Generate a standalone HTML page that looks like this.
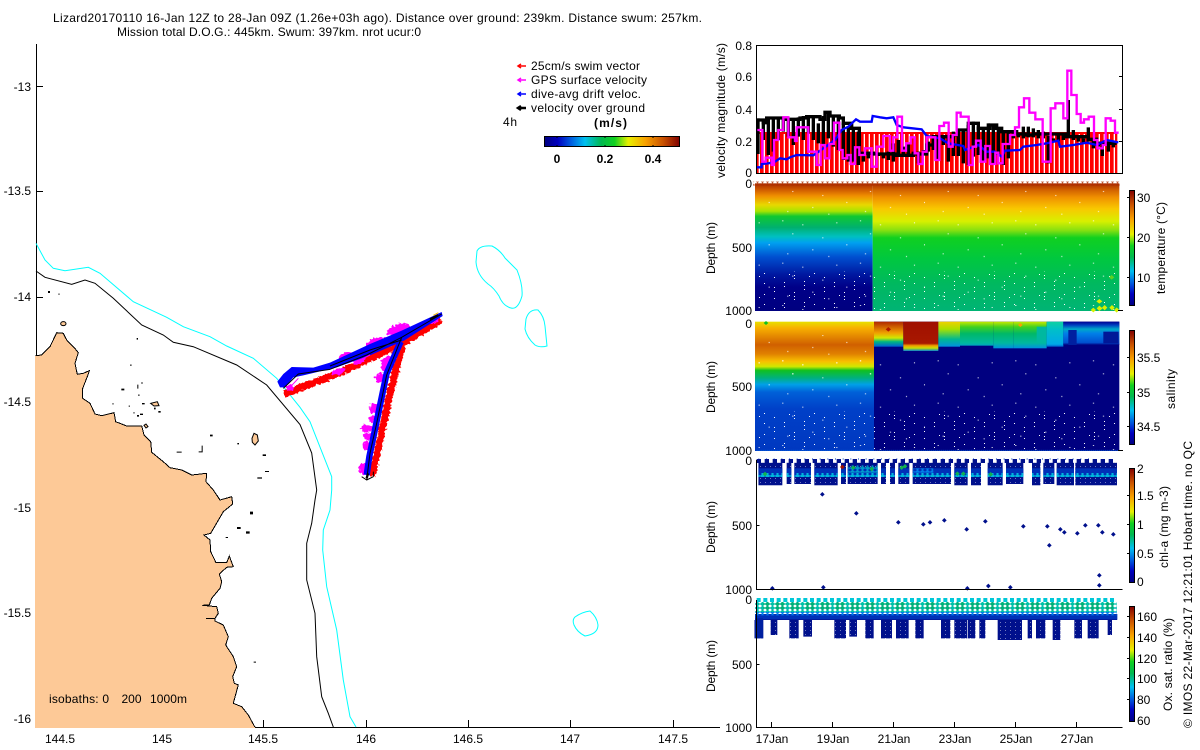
<!DOCTYPE html>
<html><head><meta charset="utf-8"><title>Lizard20170110</title>
<style>
html,body{margin:0;padding:0;background:#fff;overflow:hidden}
svg{display:block}
text{font-family:"Liberation Sans",sans-serif;font-size:12px;fill:#000}
.r{text-anchor:end}.m{text-anchor:middle}.b{font-weight:bold}
</style></head><body>
<svg width="1200" height="750" viewBox="0 0 1200 750" xmlns="http://www.w3.org/2000/svg">
<defs>
<linearGradient id="jetH" x1="0" x2="1" y1="0" y2="0">
<stop offset="0" stop-color="#00007f"/><stop offset=".1" stop-color="#0000c0"/><stop offset=".2" stop-color="#0060e0"/><stop offset=".3" stop-color="#00c0f0"/><stop offset=".42" stop-color="#00b850"/><stop offset=".52" stop-color="#10d020"/><stop offset=".62" stop-color="#e8f000"/><stop offset=".75" stop-color="#f8a000"/><stop offset=".88" stop-color="#c85000"/><stop offset="1" stop-color="#800000"/>
</linearGradient>
<linearGradient id="jetV" x1="0" x2="0" y1="1" y2="0">
<stop offset="0" stop-color="#00007f"/><stop offset=".1" stop-color="#0000c0"/><stop offset=".2" stop-color="#0060e0"/><stop offset=".3" stop-color="#00c0f0"/><stop offset=".42" stop-color="#00b850"/><stop offset=".52" stop-color="#10d020"/><stop offset=".62" stop-color="#e8f000"/><stop offset=".75" stop-color="#f8a000"/><stop offset=".88" stop-color="#c85000"/><stop offset="1" stop-color="#800000"/>
</linearGradient>
<linearGradient id="tL" gradientUnits="userSpaceOnUse" x1="0" x2="0" y1="25" y2="405">
<stop offset="0" stop-color="#a82c00"/><stop offset=".04" stop-color="#c85000"/><stop offset=".1" stop-color="#f09000"/><stop offset=".17" stop-color="#e8d800"/><stop offset=".22" stop-color="#a8e400"/><stop offset=".26" stop-color="#10c830"/><stop offset=".35" stop-color="#00b070"/><stop offset=".42" stop-color="#00c0c0"/><stop offset=".47" stop-color="#00a0f0"/><stop offset=".58" stop-color="#0050d0"/><stop offset=".72" stop-color="#0018a0"/><stop offset=".82" stop-color="#000088"/><stop offset="1" stop-color="#000080"/>
</linearGradient>
<linearGradient id="tR" gradientUnits="userSpaceOnUse" x1="0" x2="0" y1="25" y2="405">
<stop offset="0" stop-color="#a82c00"/><stop offset=".05" stop-color="#d06000"/><stop offset=".11" stop-color="#f09000"/><stop offset=".2" stop-color="#f8c800"/><stop offset=".3" stop-color="#d8f000"/><stop offset=".37" stop-color="#88e010"/><stop offset=".43" stop-color="#10d020"/><stop offset=".6" stop-color="#00c840"/><stop offset=".8" stop-color="#00b860"/><stop offset="1" stop-color="#00b474"/>
</linearGradient>
<linearGradient id="sL" gradientUnits="userSpaceOnUse" x1="0" x2="0" y1="20" y2="405">
<stop offset="0" stop-color="#e8e000"/><stop offset=".05" stop-color="#f8b000"/><stop offset=".18" stop-color="#d06000"/><stop offset=".25" stop-color="#e08000"/><stop offset=".31" stop-color="#f8c000"/><stop offset=".35" stop-color="#d0e800"/><stop offset=".38" stop-color="#10c020"/><stop offset=".44" stop-color="#00b080"/><stop offset=".49" stop-color="#00a0e8"/><stop offset=".55" stop-color="#0060d8"/><stop offset=".68" stop-color="#0040c8"/><stop offset="1" stop-color="#0038c0"/>
</linearGradient>
<linearGradient id="s1" gradientUnits="userSpaceOnUse" x1="0" x2="0" y1="20" y2="95">
<stop offset="0" stop-color="#b02800"/><stop offset=".45" stop-color="#f0a000"/><stop offset=".65" stop-color="#d0e800"/><stop offset=".8" stop-color="#00b880"/><stop offset="1" stop-color="#0060d8"/>
</linearGradient>
<linearGradient id="s2" gradientUnits="userSpaceOnUse" x1="0" x2="0" y1="20" y2="108">
<stop offset="0" stop-color="#a01000"/><stop offset=".74" stop-color="#a81800"/><stop offset=".82" stop-color="#f0a000"/><stop offset=".9" stop-color="#c8e000"/><stop offset="1" stop-color="#0080d8"/>
</linearGradient>
<linearGradient id="s3" gradientUnits="userSpaceOnUse" x1="0" x2="0" y1="20" y2="95">
<stop offset="0" stop-color="#f0d000"/><stop offset=".3" stop-color="#a8e000"/><stop offset=".7" stop-color="#00b890"/><stop offset="1" stop-color="#0090e0"/>
</linearGradient>
<linearGradient id="s4" gradientUnits="userSpaceOnUse" x1="0" x2="0" y1="20" y2="100">
<stop offset="0" stop-color="#c8e800"/><stop offset=".2" stop-color="#40d020"/><stop offset=".45" stop-color="#00b868"/><stop offset=".8" stop-color="#00b8a0"/><stop offset="1" stop-color="#0090e0"/>
</linearGradient>
<linearGradient id="s5" gradientUnits="userSpaceOnUse" x1="0" x2="0" y1="20" y2="95">
<stop offset="0" stop-color="#10d0a0"/><stop offset=".3" stop-color="#00c0c8"/><stop offset=".9" stop-color="#00a8e8"/><stop offset="1" stop-color="#0060d0"/>
</linearGradient>
<linearGradient id="s6" gradientUnits="userSpaceOnUse" x1="0" x2="0" y1="20" y2="90">
<stop offset="0" stop-color="#000090"/><stop offset=".15" stop-color="#0040c0"/><stop offset=".32" stop-color="#00a8c8"/><stop offset=".5" stop-color="#0080e8"/><stop offset=".9" stop-color="#0050d0"/><stop offset="1" stop-color="#000080"/>
</linearGradient>
<pattern id="wdA" patternUnits="userSpaceOnUse" width="233" height="127">
<g fill="#fff"><rect x="14" y="9" width="3" height="3"/><rect x="44" y="48" width="3" height="3"/><rect x="74" y="21" width="3" height="3"/><rect x="104" y="96" width="3" height="3"/><rect x="134" y="60" width="3" height="3"/><rect x="176" y="15" width="3" height="3"/><rect x="206" y="81" width="3" height="3"/><rect x="29" y="108" width="3" height="3"/><rect x="152" y="116" width="3" height="3"/></g>
</pattern>
<pattern id="wdB" patternUnits="userSpaceOnUse" width="150" height="63">
<g fill="#fff"><rect x="12" y="3" width="3" height="3"/><rect x="12" y="15" width="3" height="3"/><rect x="12" y="27" width="3" height="3"/><rect x="42" y="9" width="3" height="3"/><rect x="42" y="42" width="3" height="3"/><rect x="72" y="21" width="3" height="3"/><rect x="72" y="33" width="3" height="3"/><rect x="72" y="54" width="3" height="3"/><rect x="102" y="6" width="3" height="3"/><rect x="102" y="18" width="3" height="3"/><rect x="132" y="36" width="3" height="3"/><rect x="132" y="48" width="3" height="3"/><rect x="132" y="57" width="3" height="3"/><rect x="27" y="51" width="3" height="3"/><rect x="117" y="45" width="3" height="3"/></g>
</pattern>
<pattern id="dN" patternUnits="userSpaceOnUse" width="15" height="12"><rect width="15" height="12" fill="#00108c"/><rect width="2" height="2" fill="#fff"/></pattern>
<pattern id="dB" patternUnits="userSpaceOnUse" width="15" height="12"><rect width="15" height="12" fill="#0030b8"/></pattern>
<pattern id="dM" patternUnits="userSpaceOnUse" width="15" height="12"><path d="M7.5 -1L16 6 7.5 13 -1 6z" fill="#0080e8"/></pattern>
<pattern id="dC" patternUnits="userSpaceOnUse" width="15" height="12"><path d="M7.5 -1L16 6 7.5 13 -1 6z" fill="#00c8d8"/></pattern>
<pattern id="dT" patternUnits="userSpaceOnUse" width="15" height="12"><path d="M7.5 -1L16 6 7.5 13 -1 6z" fill="#00c0a8"/></pattern>
<pattern id="dG" patternUnits="userSpaceOnUse" width="45" height="12"><path d="M7.5 -1L16 6 7.5 13 -1 6zM22 -1L31 6 22 13 14 6z" fill="#00b078"/></pattern>
<pattern id="dR" patternUnits="userSpaceOnUse" width="15" height="12"><path d="M7.5 0L15 6 7.5 12 0 6z" fill="#b03000"/></pattern>
<pattern id="gap" patternUnits="userSpaceOnUse" width="15" height="10"><rect x="11" width="4" height="10" fill="#fff"/></pattern>
<clipPath id="chlc"><path d="M175 38h72v68h-72zM260 38h14v64h-14zM283 38h50v64h-50zM343 38h70v68h-70zM423 38h15v64h-15zM443 38h90v64h-90zM543 38h15v64h-15zM570 38h15v64h-15zM595 38h33v64h-33zM638 38h115v64h-115zM763 38h40v68h-40zM813 38h30v68h-30zM863 38h45v68h-45zM918 38h52v64h-52zM996 38h25v68h-25zM1030 38h33v64h-33zM1070 38h52v68h-52zM1126 38h125v68h-125z"/></clipPath>
<clipPath id="oxc"><path d="M165 72h1087v18h-1087zM163 90h27v55h-27zM212 90h20v45h-20zM268 90h28v55h-28zM310 90h26v50h-26zM403 90h35v55h-35zM448 90h23v50h-23zM496 90h25v55h-25zM543 90h33v55h-33zM588 90h38v55h-38zM646 90h25v55h-25zM723 90h28v55h-28zM763 90h38v55h-38zM803 90h23v55h-23zM838 90h18v55h-18zM893 90h73v60h-73zM983 90h13v55h-13zM1008 90h28v55h-28zM1058 90h23v60h-23zM1123 90h23v55h-23zM1163 90h33v55h-33zM1223 90h13v45h-13z"/></clipPath>
<filter id="rough" x="-10%" y="-10%" width="120%" height="120%"><feTurbulence type="fractalNoise" baseFrequency=".14" numOctaves="1" seed="3" result="n"/><feDisplacementMap in="SourceGraphic" in2="n" scale="16" xChannelSelector="R" yChannelSelector="G"/></filter>
</defs>

<!-- title -->
<text x="53" y="22" textLength="649">Lizard20170110 16-Jan 12Z to 28-Jan 09Z (1.26e+03h ago). Distance over ground: 239km. Distance swum: 257km.</text>
<text x="117" y="36" textLength="304">Mission total D.O.G.: 445km. Swum: 397km. nrot ucur:0</text>

<!-- map land -->
<path fill="#fdc997" stroke="#000" stroke-width="1" shape-rendering="crispEdges" d="M36 355.7L41.7 355 50 346.7 56.7 332.7 63.3 333.3 66.7 340 74 347.3 78.3 352.7 75 363.3 77.3 374.3 83.3 373.3 89.3 370.7 87.3 376.7 82.7 388.3 82.7 398.3 90 403.3 95 414 101.7 415.7 114 412.7 115.7 421.7 126.7 426 141.7 426 144 435 150.7 441.7 151.7 452.3 163.3 461.7 170 467.7 181.7 470 191.7 475 206.7 473.3 206 481.7 213.3 490 220 500 231.7 496.7 232.7 504 223.3 511.7 210.7 533.3 204 535 210 540 210.7 551.7 216 562.7 226.7 562.7 229.3 556 233.3 566.7 226.7 567.3 219.3 574 221.7 581.7 220 588.3 211.7 598.3 209.3 605 202.3 605.3 216.7 606.7 218.3 613.3 215 618.3 206 618.3 215 618.3 215 621 223.3 625 228.3 636.7 225.7 645 233.3 656.7 236.7 666.7 232.7 676.7 234.3 683.3 238.3 685 233.3 703.3 241.7 706.7 248.3 715 255 727.3 36 727.3z"/>
<rect x="35" y="356" width="2" height="372" fill="#fdc997"/>
<rect x="35" y="727" width="220" height="1" fill="#fdc997"/>

<!-- axes -->
<path stroke="#000" stroke-width="1" fill="none" shape-rendering="crispEdges" d="M36.5 44V355M36 86.5h7M36 191.5h7M36 297.5h7M255 727.5H720M263.5 727v-7M366.5 727v-7M468.5 727v-7M570.5 727v-7M673.5 727v-7"/>

<!-- isobaths -->
<polyline fill="none" stroke="#000" stroke-width="1" points="36,271 45,277.3 71.7,284.3 85,280 95,283.3 113.3,298.3 141.7,325 163.3,335 173.3,342.3 193.3,346.7 236.7,365 266.7,385 300,424.5 311.7,453 316.7,490 315,500 311.7,523.3 306.7,543.3 306.7,580 315,613.3 316.7,656.7 321.7,696.7 328.3,713.3 333.3,727"/>
<polyline fill="none" stroke="#00ffff" stroke-width="1" points="36,243.3 45,260 53.3,268.3 65,270.7 88.3,267.3 100,273.3 133.3,301.7 166.7,317.3 183.3,326.7 210,336.7 226.7,346 253.3,358.3 276.7,378.3 300,407.3 310,421.7 331.7,476.7 331.7,490 330,510 323.3,530 322.7,550 326.7,586.7 336.7,630 343.3,680 350,716.7 356,727"/>
<path fill="none" stroke="#00ffff" stroke-width="1" d="M477 251Q480 245 492 246 500 250 505 258L517 270Q523 285 522 296 518 310 511 308 503 306 499 296 494 288 488 284 477 275 476 262zM526 319Q529 309 538 310 544 316 545 326L547 346Q540 348 535 345 527 338 525 329zM590 611Q597 617 598 625 598 634 585 636 577 632 574 625 572 620 575 617 582 612 590 611z"/>

<!-- small islands -->
<g transform="translate(0 240) scale(.33333)" fill="#000">
<path d="M144 153h6v6h-6zM175 161h4v3h-4zM410 294h4v5h-4zM390 374h5v3h-5zM364 446h9v5h-9zM412 434h3v12h-3zM424 427h4v4h-4zM414 464h5v3h-5zM426 489h8v4h-8zM337 490h4v3h-4zM386 497h4v3h-4zM400 517h4v3h-4zM420 521h9v4h-9zM411 525h6v5h-6zM475 513h7v5h-7zM462 503h5v5h-5zM630 584h8v5h-8zM596 634h12v3h-12zM605 617h3v18h-3zM530 635h15v3h-15zM712 609h5v4h-5zM788 643h10v5h-10zM795 693h12v3h-12zM772 712h14v4h-14z"/>
<ellipse cx="190" cy="251" rx="8" ry="6" fill="#fdc997" stroke="#000" stroke-width="3"/>
<path d="M452 490l20-5 5 12-15 1z" fill="#fdc997" stroke="#000" stroke-width="3"/>
<path d="M432 556l6-4 6 8-6 4z" fill="#fdc997" stroke="#000" stroke-width="3"/>
<path d="M756 595l6-15 10 5 3 18-10 12-8-8z" fill="#fdc997" stroke="#000" stroke-width="3"/>
</g>
<g transform="translate(0 490) scale(.33333)" fill="#000">
<path d="M750 65h9v8h-9zM711 111h11v6h-11zM738 124h11v7h-11zM677 141h7v3h-7zM761 515h7v3h-7z"/>
</g>

<!-- tracks -->
<g transform="translate(270 300) scale(.33333)" fill="none" stroke-linejoin="round">
<g filter="url(#rough)">
<polyline stroke="#ff0000" stroke-width="22" points="512,60 400,128 200,222 42,282"/>
<polyline stroke="#ff0000" stroke-width="22" points="398,128 358,290 330,420 306,528"/>
<g fill="#ff00ff">
<ellipse cx="385" cy="88" rx="36" ry="15" transform="rotate(-18 385 88)"/>
<ellipse cx="318" cy="127" rx="30" ry="13" transform="rotate(-20 318 127)"/>
<ellipse cx="228" cy="169" rx="22" ry="12" transform="rotate(-15 228 169)"/>
<ellipse cx="268" cy="181" rx="20" ry="11" transform="rotate(-25 268 181)"/>
<ellipse cx="205" cy="214" rx="20" ry="10" transform="rotate(-15 205 214)"/>
<ellipse cx="350" cy="190" rx="16" ry="24" transform="rotate(25 350 190)"/>
<ellipse cx="330" cy="233" rx="16" ry="13"/>
<ellipse cx="312" cy="325" rx="14" ry="16"/>
<ellipse cx="308" cy="358" rx="12" ry="11"/>
<ellipse cx="290" cy="385" rx="20" ry="11"/>
<ellipse cx="293" cy="410" rx="14" ry="11"/>
<ellipse cx="290" cy="438" rx="12" ry="14"/>
<ellipse cx="281" cy="507" rx="14" ry="18"/>
<ellipse cx="492" cy="62" rx="16" ry="8" transform="rotate(-25 492 62)"/>
<ellipse cx="60" cy="262" rx="12" ry="10"/>
</g>
</g>
<polygon fill="#0000ff" points="22,245 40,222 65,201 130,203 180,188 300,132 395,92 515,36 518,48 402,122 300,166 200,202 100,226 70,232 45,262 30,262"/>
<polyline stroke="#0000ff" stroke-width="19" points="392,125 350,220 325,340 298,470 290,525"/>
<path stroke="#ff00ff" stroke-width="3" d="M60 262L85 235M250 190L300 165"/>
<path stroke="#000" stroke-width="3" d="M515 42L395 112 290 165 180 208 85 222 40 265M395 120L300 150 180 198M395 112L350 225 320 370 300 460 290 540 275 530M290 540L310 530 310 515"/>
<path stroke="#000" stroke-width="7" d="M505 46L480 58M290 535L294 520"/>
<path stroke="#f8c000" stroke-width="3" d="M505 38L490 46"/>
</g>

<!-- map labels -->
<text class="r" x="31" y="91">-13</text><text class="r" x="31" y="195">-13.5</text><text class="r" x="31" y="301">-14</text><text class="r" x="31" y="406">-14.5</text><text class="r" x="31" y="512">-15</text><text class="r" x="31" y="617">-15.5</text><text class="r" x="31" y="723">-16</text>
<text class="m" x="60" y="743">144.5</text><text class="m" x="162" y="743">145</text><text class="m" x="263" y="743">145.5</text><text class="m" x="366" y="743">146</text><text class="m" x="468" y="743">146.5</text><text class="m" x="570" y="743">147</text><text class="m" x="673" y="743">147.5</text>
<text x="49" y="703" textLength="60">isobaths: 0</text><text x="121.5" y="703" textLength="20">200</text><text x="150" y="703" textLength="37">1000m</text>

<!-- legend -->
<g fill="none" stroke-width="1.5">
<path stroke="#ff0000" d="M519 66h7M521 64l-3 2 3 2"/><path stroke="#ff00ff" d="M519 80h7M521 78l-3 2 3 2"/><path stroke="#0000ff" d="M519 94h7M521 92l-3 2 3 2"/><path stroke="#000" stroke-width="2.5" d="M519 108h7M521 106l-3 2 3 2"/>
</g>
<text x="531" y="70" textLength="109">25cm/s swim vector</text>
<text x="531" y="84" textLength="116">GPS surface velocity</text>
<text x="531" y="98" textLength="110">dive-avg drift veloc.</text>
<text x="531" y="112" textLength="114">velocity over ground</text>
<text x="503" y="126" textLength="14">4h</text>
<text class="b" x="594" y="127" textLength="33">(m/s)</text>
<rect x="544.5" y="136.5" width="135" height="10" fill="url(#jetH)" stroke="#000"/>
<path stroke="#000" stroke-width="1" d="M557 136v2M605 136v2M653 136v2M557 147v-2M605 147v-2M653 147v-2"/>
<text class="m b" x="557" y="163">0</text><text class="m b" x="605" y="163">0.2</text><text class="m b" x="653" y="163">0.4</text>

<!-- panel 1 -->
<g transform="translate(700 30) scale(.33333)" fill="none">
<rect x="170" y="306" width="1082" height="124" fill="#ff0000"/>
<rect x="170" y="312" width="1082" height="118" fill="url(#gap)"/>
<path stroke="#000" stroke-width="10" d="M174 265V372M190 275V330M205 262V375M220 262V365M235 265V330M250 262V305M265 265V320M280 265V345M295 262V320M310 258V330M325 262V310M340 262V330M355 280V340M370 258V345M385 245V325M400 258V350M415 262V360M430 278V390M445 290V395M460 295V395M475 305V405M490 370V395M505 365V385M520 365V375M535 368V378M550 368V385M565 365V390M580 340V395M595 330V380M610 350V380M625 340V380M640 365V378M655 365V400M670 360V372M685 335V365M700 318V360M715 318V392M730 315V345M745 318V395M760 305V378M775 300V378M790 296V400M805 285V405M820 275V380M835 290V375M850 292V395M865 280V385M880 285V400M895 300V375M910 305V405M925 305V385M940 310V325M955 310V322M970 290V325M985 290V322M1000 295V322M1015 300V325M1030 305V325M1045 318V400M1060 325V332M1075 315V335M1090 315V330M1105 210V322M1120 300V330M1135 322V335M1150 325V340M1165 292V335M1180 330V355M1195 335V350M1207 335V378M1225 340V365M1240 340V352"/>
<path stroke="#000" stroke-width="10" d="M172 270H190V278H200V264H260V268H300V264H320V260H360V268H375V247H390V258H418V264H430V280H455V295H478V370H520V372H590V376H640V372H680V345H700V320H760V315H775V300H805V280H835V295H870V285H890V295H905V305H950V312H975V315H1000V312H1100V320H1165V328H1190V340H1250"/>
<polyline stroke="#0000ff" stroke-width="7" points="170,412 185,412 185,402 205,400 225,395 240,385 260,388 270,382 290,375 340,376 380,348 405,330 425,300 445,290 468,268 480,275 515,275 518,258 540,262 560,265 580,262 590,285 610,292 665,298 680,318 720,325 745,340 790,348 795,360 835,345 860,365 885,365 905,380 915,362 960,360 970,350 1010,345 1040,340 1075,332 1080,350 1120,345 1160,338 1190,345 1220,330 1255,337"/>
<path stroke="#ff00ff" stroke-width="7" d="M172 300H187V395H197V383H215V405H222V330H235V300H250V262H265V322H285V333H290V292H325V365H350V405H362V345H375V385H388V342H402V278H418V360H428V385H442V375H452V402H465V352H478V375H495V355H515V410H530V350H550V318H570V362H580V322H592V260H606V362H618V340H632V322H644V370H655V402H668V365H680V322H706V390H718V288H732V278H746V350H758V315H770V248H782V260H806V405H818V350H828V332H842V395H856V348H870V402H886V368H895V400H908V342H930V315H945V292H957V232H972V205H988V248H1006V268H1028V395H1052V235H1066V220H1090V265H1102V122H1114V195H1130V252H1142V278H1152V268H1166V260H1182V330H1192V355H1208V345H1217V265H1232V272H1245V308H1256"/>
</g>
<path stroke="#000" stroke-width="1" fill="none" shape-rendering="crispEdges" d="M756.5 45V173.5H1122.5V45.5H756.5M1119 76.5h3M1119 109.5h3M1119 141.5h3"/>
<text class="r" x="752" y="50">0.8</text><text class="r" x="752" y="81">0.6</text><text class="r" x="752" y="114">0.4</text><text class="r" x="752" y="146">0.2</text><text class="r" x="752" y="177">0</text>
<text transform="translate(725 178) rotate(-90)" textLength="135">velocity magnitude (m/s)</text>

<!-- panel 2 temperature -->
<g transform="translate(700 175) scale(.33333)">
<rect x="165" y="25" width="353" height="383" fill="url(#tL)"/>
<rect x="518" y="25" width="740" height="383" fill="url(#tR)"/>
<rect x="160" y="20" width="1100" height="12" fill="url(#dR)"/>
<rect x="170" y="40" width="1080" height="365" fill="url(#wdA)"/>
<rect x="170" y="290" width="1080" height="115" fill="url(#wdB)"/>
<path fill="#d8f000" d="M1180 398l8 7-8 7-8-7zM1198 392l10 8-10 8-8-8zM1214 390l8 8-8 8-8-8zM1236 390l8 8-8 8-8-8zM1198 372l9 7-9 7-9-7zM1250 397l8 8-8 8-8-8z"/>
<path fill="#60d020" d="M1235 300l8 7-8 7-8-7z"/>
</g>
<!-- panel 3 salinity -->
<g transform="translate(700 315) scale(.33333)">
<rect x="165" y="20" width="357" height="388" fill="url(#sL)"/>
<rect x="522" y="20" width="736" height="388" fill="#000080"/>
<rect x="522" y="20" width="88" height="75" fill="url(#s1)"/>
<rect x="610" y="20" width="105" height="88" fill="url(#s2)"/>
<rect x="715" y="20" width="65" height="75" fill="url(#s3)"/>
<rect x="780" y="20" width="100" height="72" fill="url(#s4)"/>
<rect x="880" y="20" width="60" height="80" fill="url(#s4)"/>
<rect x="940" y="20" width="100" height="80" fill="url(#s4)"/>
<rect x="1010" y="35" width="30" height="50" fill="#00b8a0"/>
<rect x="1040" y="20" width="50" height="75" fill="url(#s5)"/>
<rect x="1090" y="20" width="168" height="70" fill="url(#s6)"/>
<rect x="1210" y="50" width="46" height="35" fill="#001898"/>
<rect x="1105" y="45" width="25" height="45" fill="#0020a0"/>
<path fill="#b01800" d="M565 36l8 7-8 7-8-7z"/>
<path fill="#10c020" d="M198 18l7 6-7 6-7-6z"/>
<path fill="#f8a000" d="M961 24l7 6-7 6-7-6z"/>
<rect x="170" y="60" width="345" height="120" fill="url(#wdA)"/>
<rect x="170" y="120" width="1080" height="285" fill="url(#wdA)"/>
<rect x="170" y="290" width="1080" height="115" fill="url(#wdB)"/>
<path stroke="#0040c0" stroke-width="3" stroke-dasharray="3 20" d="M175 432H1185"/>
<path stroke="#0060e0" stroke-width="3" stroke-dasharray="3 3" d="M170 406H1255"/>
</g>
<!-- panel 4 chl -->
<g transform="translate(700 450) scale(.33333)">
<g clip-path="url(#chlc)">
<rect x="170" y="38" width="1085" height="70" fill="url(#dN)"/>
<rect x="170" y="55" width="1085" height="24" fill="url(#dB)"/>
<rect x="170" y="69" width="1085" height="12" fill="url(#dM)"/>
<rect x="170" y="69" width="1085" height="12" fill="url(#dC)" opacity=".75"/>
<rect x="445" y="46" width="90" height="22" fill="url(#dC)" opacity=".7"/>
<rect x="640" y="55" width="60" height="13" fill="url(#dM)"/>
</g>
<path stroke="#00108c" stroke-width="12" stroke-dasharray="13 11" d="M170 33H1250"/>
<path fill="#10b050" d="M195 65l7 7-7 7-7-7zM460 46l7 7-7 7-7-7zM515 50l7 7-7 7-7-7zM605 46l7 7-7 7-7-7zM615 42l7 7-7 7-7-7zM772 64l7 7-7 7-7-7zM790 64l7 7-7 7-7-7zM872 66l7 7-7 7-7-7z"/>
<path fill="#a01000" d="M427 44l7 7-7 7-7-7z"/>
<path fill="#00108c" d="M217 408l7 7-7 7-7-7zM367 126l7 7-7 7-7-7zM370 405l7 7-7 7-7-7zM469 183l7 7-7 7-7-7zM595 210l7 7-7 7-7-7zM670 216l7 7-7 7-7-7zM690 210l7 7-7 7-7-7zM733 204l7 7-7 7-7-7zM800 231l7 7-7 7-7-7zM802 408l7 7-7 7-7-7zM856 207l7 7-7 7-7-7zM865 401l7 7-7 7-7-7zM931 405l7 7-7 7-7-7zM970 222l7 7-7 7-7-7zM1042 222l7 7-7 7-7-7zM1048 279l7 7-7 7-7-7zM1081 231l7 7-7 7-7-7zM1093 240l7 7-7 7-7-7zM1132 243l7 7-7 7-7-7zM1156 219l7 7-7 7-7-7zM1195 219l7 7-7 7-7-7zM1207 240l7 7-7 7-7-7zM1240 246l7 7-7 7-7-7zM1198 369l7 7-7 7-7-7zM1198 399l7 7-7 7-7-7z"/>
</g>
<!-- panel 5 ox -->
<g transform="translate(700 590) scale(.33333)">
<g clip-path="url(#oxc)">
<rect x="163" y="72" width="1090" height="80" fill="url(#dN)"/>
<rect x="163" y="72" width="1090" height="16" fill="url(#dB)"/>
</g>
<rect x="165" y="50" width="1085" height="26" fill="url(#dM)"/>
<rect x="165" y="36" width="1085" height="30" fill="url(#dT)"/>
<rect x="190" y="36" width="1050" height="24" fill="url(#dG)"/>
<path stroke="#00c8d8" stroke-width="12" stroke-dasharray="12 8" d="M170 30H1250"/>
<rect x="165" y="85" width="24" height="60" fill="#0020a0"/>
</g>
<!-- axis for lower panels -->
<path stroke="#000" stroke-width="1" fill="none" shape-rendering="crispEdges" d="M756.5 460V589.5H1122.5M756.5 600V727.5H1122.5M756.5 525.5h3M756.5 664.5h3M771.5 727v-5M832.5 727v-5M893.5 727v-5M954.5 727v-5M1015.5 727v-5M1076.5 727v-5M1118 310.5h5M1118 450.5h5"/>
<text class="r" x="752" y="188">0</text><text class="r" x="752" y="252">500</text><text class="r" x="752" y="315">1000</text>
<text class="r" x="752" y="328">0</text><text class="r" x="752" y="391">500</text><text class="r" x="752" y="455">1000</text>
<text class="r" x="752" y="465">0</text><text class="r" x="752" y="530">500</text><text class="r" x="752" y="594">1000</text>
<text class="r" x="752" y="604">0</text><text class="r" x="752" y="669">500</text><text class="r" x="752" y="732">1000</text>
<text transform="translate(715 274) rotate(-90)" textLength="52">Depth (m)</text>
<text transform="translate(715 413) rotate(-90)" textLength="52">Depth (m)</text>
<text transform="translate(715 553) rotate(-90)" textLength="52">Depth (m)</text>
<text transform="translate(715 692) rotate(-90)" textLength="52">Depth (m)</text>
<text class="m" x="772" y="743">17Jan</text><text class="m" x="833" y="743">19Jan</text><text class="m" x="894" y="743">21Jan</text><text class="m" x="955" y="743">23Jan</text><text class="m" x="1016" y="743">25Jan</text><text class="m" x="1077" y="743">27Jan</text>

<!-- colorbars -->
<g stroke="#000" stroke-width="1" shape-rendering="crispEdges">
<rect x="1129.5" y="190.5" width="5" height="115" fill="url(#jetV)"/>
<rect x="1129.5" y="330.5" width="5" height="114" fill="url(#jetV)"/>
<rect x="1129.5" y="468.5" width="5" height="114" fill="url(#jetV)"/>
<rect x="1129.5" y="606.5" width="5" height="115" fill="url(#jetV)"/>
<path fill="none" d="M1127 197.5h2M1127 237.5h2M1127 277.5h2M1127 357.5h2M1127 392.5h2M1127 426.5h2M1127 495.5h2M1127 524.5h2M1127 553.5h2M1127 616.5h2M1127 637.5h2M1127 658.5h2M1127 678.5h2M1127 699.5h2"/>
</g>
<text x="1137" y="202">30</text><text x="1137" y="242">20</text><text x="1137" y="282">10</text>
<text x="1137" y="362">35.5</text><text x="1137" y="397">35</text><text x="1137" y="431">34.5</text>
<text x="1137" y="473">2</text><text x="1137" y="500">1.5</text><text x="1137" y="529">1</text><text x="1137" y="558">0.5</text><text x="1137" y="586">0</text>
<text x="1137" y="621">160</text><text x="1137" y="642">140</text><text x="1137" y="663">120</text><text x="1137" y="683">100</text><text x="1137" y="704">80</text><text x="1137" y="725">60</text>
<text transform="translate(1165 294) rotate(-90)" textLength="92">temperature (°C)</text>
<text transform="translate(1175 409) rotate(-90)" textLength="40">salinity</text>
<text transform="translate(1168 568) rotate(-90)" textLength="82">chl-a (mg m-3)</text>
<text transform="translate(1172 711) rotate(-90)" textLength="93">Ox. sat. ratio (%)</text>
<text transform="translate(1192 728) rotate(-90)" textLength="287">© IMOS 22-Mar-2017 12:21:01 Hobart time. no QC</text>
</svg>
</body></html>
